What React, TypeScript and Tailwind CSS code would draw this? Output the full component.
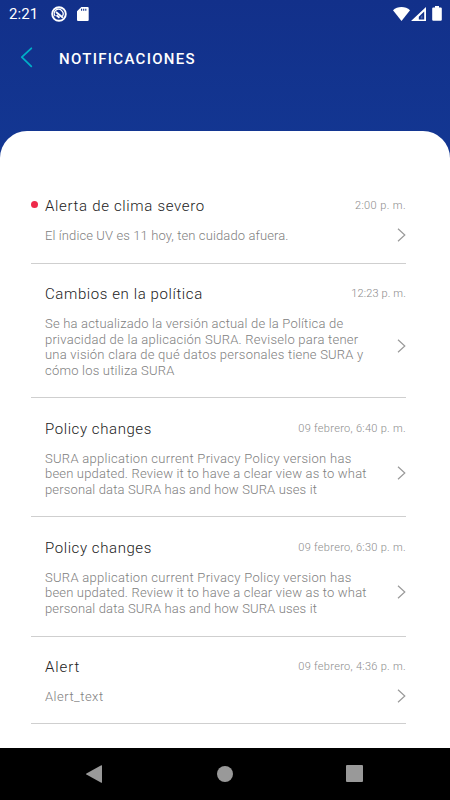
import { ReactNode } from "react";

interface INotification {
  id: number;
  title: string;
  titleClass: string;
  time: string;
  timeClass: string;
  lines: { text: string; className: string }[];
  unread?: boolean;
}

const policyLines = [
  { text: "SURA application current Privacy Policy version has", className: "tracking-[0.29px]" },
  { text: "been updated. Review it to have a clear view as to what", className: "tracking-[0.18px]" },
  { text: "personal data SURA has and how SURA uses it", className: "tracking-[0.15px]" },
];

const notifications: INotification[] = [
  {
    id: 1,
    title: "Alerta de clima severo",
    titleClass: "tracking-[0.67px]",
    time: "2:00 p. m.",
    timeClass: "tracking-[0.4px]",
    lines: [{ text: "El índice UV es 11 hoy, ten cuidado afuera.", className: "tracking-[0.11px]" }],
    unread: true,
  },
  {
    id: 2,
    title: "Cambios en la política",
    titleClass: "tracking-[0.6px]",
    time: "12:23 p. m.",
    timeClass: "tracking-[0.14px]",
    lines: [
      { text: "Se ha actualizado la versión actual de la Política de", className: "tracking-[0.19px]" },
      { text: "privacidad de la aplicación SURA. Reviselo para tener", className: "tracking-[0.25px]" },
      { text: "una visión clara de qué datos personales tiene SURA y", className: "tracking-[0.22px]" },
      { text: "cómo los utiliza SURA", className: "tracking-[0.21px]" },
    ],
  },
  {
    id: 3,
    title: "Policy changes",
    titleClass: "tracking-[0.58px]",
    time: "09 febrero, 6:40 p. m.",
    timeClass: "tracking-[0.3px]",
    lines: policyLines,
  },
  {
    id: 4,
    title: "Policy changes",
    titleClass: "tracking-[0.58px]",
    time: "09 febrero, 6:30 p. m.",
    timeClass: "tracking-[0.3px]",
    lines: policyLines,
  },
  {
    id: 5,
    title: "Alert",
    titleClass: "tracking-[0.9px]",
    time: "09 febrero, 4:36 p. m.",
    timeClass: "tracking-[0.3px]",
    lines: [{ text: "Alert_text", className: "tracking-[0.49px]" }],
  },
];

function StatusBar() {
  return (
    <div className="flex h-7 items-center pl-[9px] pr-2 text-white">
      <span className="w-[42px] text-[15px] leading-7 tracking-[0.1px]">2:21</span>
      <svg className="-mt-px size-4" viewBox="0 0 16 16" fill="none">
        <circle cx="8" cy="8" r="6.800" stroke="currentColor" strokeWidth="1.9" />
        <path d="M4.300 10.200A4.200 4.200 0 0 1 10.700 4.700A4.200 4.200 0 0 1 11.500 10" stroke="currentColor" strokeWidth="1.3" />
        <path d="M5 6L12 11.700M5.500 9.300L8.500 11.700" stroke="currentColor" strokeWidth="1.9" />
      </svg>
      <svg className="-mt-px ml-2.5 h-[14px] w-3" viewBox="0 0 12 14">
        <path d="M4.3 0H10.6a1.1 1.1 0 0 1 1.1 1.1V12.9A1.1 1.1 0 0 1 10.6 14H1.1A1.1 1.1 0 0 1 0 12.9V4.3z" fill="currentColor" />
        <path d="M4.6 1.8v2M6.7 1.8v2M8.8 1.8v2" stroke="#12338c" strokeWidth="1.1" />
      </svg>
      <div className="-mt-px ml-auto flex items-center">
        <svg className="h-[14px] w-[17px]" viewBox="0 0 17 14">
          <path d="M0 3.2C2.3 1.2 5.2 0 8.5 0S14.7 1.2 17 3.2L8.5 14z" fill="currentColor" />
        </svg>
        <svg className="ml-px h-[14px] w-[15px]" viewBox="0 0 15 14">
          <path d="M15 0v14H0zM13.2 4.6L7.800 9.8V12.4H13.2z" fill="currentColor" fillRule="evenodd" />
          <path d="M9.800 11.500V9.600L11.500 8V11.500z" fill="currentColor" opacity="0.25" />
        </svg>
        <svg className="ml-[6px] h-[15px] w-[10px]" viewBox="0 0 10 15">
          <path d="M3 0h4v1.4h1.7A1.1 1.1 0 0 1 9.8 2.5v11.2a1.1 1.1 0 0 1-1.1 1.1H1.3a1.1 1.1 0 0 1-1.1-1.1V2.5a1.1 1.1 0 0 1 1.1-1.1H3z" fill="currentColor" />
        </svg>
      </div>
    </div>
  );
}

function Header() {
  return (
    <header className="flex h-[60px] items-center pl-[20px] text-white">
      <svg className="-mt-px h-[21px] w-[13px] text-[#00aec7]" viewBox="0 0 13 21" fill="none">
        <path d="M11.3 1.3L1.8 10.2L11.3 19.3" stroke="currentColor" strokeWidth="1.8" strokeLinecap="round" strokeLinejoin="round" />
      </svg>
      <h1 className="ml-[26px] pt-px text-[15px] font-medium leading-5 tracking-[1.3px]">NOTIFICACIONES</h1>
    </header>
  );
}

function NotificationRow({ item }: { item: INotification }) {
  return (
    <li className="border-b border-[#cfcfcf] pb-[19px] pt-[20.4px]">
      <div className="flex h-5 items-center">
        <span className="flex w-[14px] shrink-0 pb-[3px]">
          {item.unread && <span className="size-[7px] rounded-full bg-[#ee2a4a]" />}
        </span>
        <h2 className={`text-[15px] leading-5 text-[#222] ${item.titleClass}`}>{item.title}</h2>
        <time className={`ml-auto text-[11px] leading-5 text-[#8c8c8c] ${item.timeClass}`}>{item.time}</time>
      </div>
      <div className="mt-[11.9px] flex items-center justify-between pl-[14px]">
        <div>
          {item.lines.map((line) => (
            <p
              key={line.text}
              className={`whitespace-nowrap text-[13px] leading-[15.6px] text-[#808080] ${line.className}`}
            >
              {line.text}
            </p>
          ))}
        </div>
        <svg className="-mb-2 -mt-2.5 h-[14px] w-[9px] shrink-0 text-[#9a9a9a]" viewBox="0 0 9 14" fill="none">
          <path d="M1 .7L7.8 7L1 13.3" stroke="currentColor" strokeWidth="1.2" />
        </svg>
      </div>
    </li>
  );
}

function NavigationBar() {
  return (
    <nav className="flex h-[52.5px] shrink-0 items-center justify-between bg-black px-[86px] text-[#999]">
      <svg className="h-[18px] w-4" viewBox="0 0 16 18">
        <path d="M15.3 0.3Q16 0 16 0.8V17.2Q16 18 15.3 17.7L.4 9.5Q-.2 9 .4 8.5z" fill="currentColor" />
      </svg>
      <span className="size-4 rounded-full bg-[#999]" />
      <span className="mr-px size-[17px] rounded-[1px] bg-[#999] -ml-px" />
    </nav>
  );
}

function Screen({ children }: { children: ReactNode }) {
  return (
    <div className="flex h-[800px] w-[450px] flex-col overflow-hidden bg-linear-to-b from-[#12308a] from-0% to-[#133793] to-20% font-['Roboto',sans-serif]">
      {children}
    </div>
  );
}

export default function App() {
  return (
    <Screen>
      <StatusBar />
      <Header />
      <main className="mt-[43px] flex-1 rounded-t-[27px] bg-white pl-[31px] pr-11 pt-[44.9px]">
        <ul className="font-light">
          {notifications.map((item) => (
            <NotificationRow key={item.id} item={item} />
          ))}
        </ul>
      </main>
      <NavigationBar />
    </Screen>
  );
}
